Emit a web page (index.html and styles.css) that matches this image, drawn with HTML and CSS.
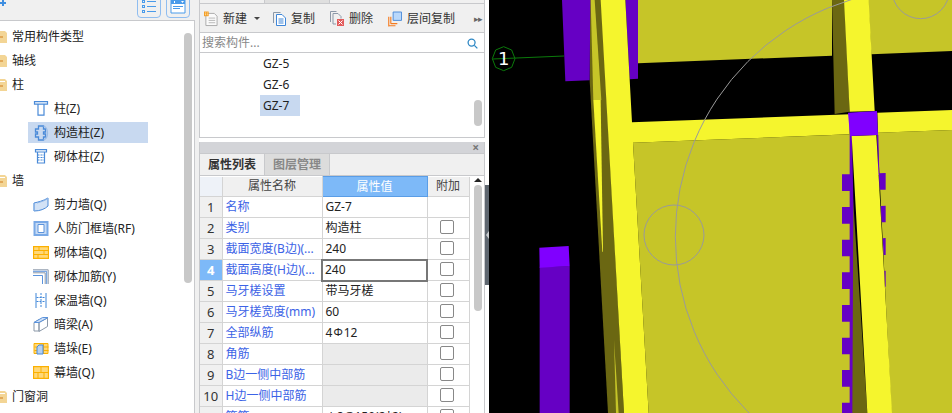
FILE: index.html
```html
<!DOCTYPE html>
<html lang="zh">
<head>
<meta charset="utf-8">
<title>构件</title>
<link rel="stylesheet" href="styles.css">
</head>
<body>
<div class="app">
  <aside class="left">
    <div class="topbar">
      <svg class="plus" width="6" height="6" viewBox="0 0 6 6"><path d="M2 0h2v2h2v2H4v2H2V4H0V2h2z" fill="#3f8ee0"/></svg>
      <div class="topbtns">
        <button class="tbtn"><svg width="14" height="15" viewBox="0 0 14 15" fill="none" stroke="#4a9bea"><rect x="0.5" y="1.5" width="2" height="2"/><rect x="0.5" y="6.5" width="2" height="2"/><rect x="0.5" y="11.5" width="2" height="2"/><path d="M5 2.5h9M5 7.5h9M5 12.5h9"/></svg></button>
        <button class="tbtn"><svg width="16" height="15" viewBox="0 0 16 15"><path d="M1 0h14v14H1z" fill="#fff" stroke="#4a9bea"/><path d="M1 0h14v5H1z" fill="#4a9bea"/><path d="M3 7.500h10M3 9.500h7" stroke="#4a9bea"/><path d="M4 2h1v2H4zM11 2h3l-1.500 2z" fill="#fff"/></svg></button>
      </div>
    </div>
    <div class="tree">
      <div class="cat"><svg class="folder" width="16" height="12" viewBox="0 0 16 12"><path d="M0 0h14l2 2v10H0z" fill="#f3d595"/><path d="M9 5h3v2H9z" fill="#e2a858"/></svg>常用构件类型</div>
      <div class="cat"><svg class="folder" width="16" height="12" viewBox="0 0 16 12"><path d="M0 0h14l2 2v10H0z" fill="#f3d595"/><path d="M9 5h3v2H9z" fill="#e2a858"/></svg>轴线</div>
      <div class="cat"><svg class="folder" width="16" height="12" viewBox="0 0 16 12"><path d="M0 0h14l2 2v10H0z" fill="#f3d595"/><path d="M9 2h5v1H9z" fill="#fff"/><path d="M9 6h3v2H9z" fill="#e2a858"/></svg>柱</div>
      <div class="item"><div class="pill"><svg class="ico" width="15" height="15" viewBox="0 0 15 15" fill="none" stroke="#4a8ad8" stroke-width="1.200"><path d="M1 .6h13v2.600H1zM4.500 3.200h6v11h-6z"/></svg>柱(Z)</div></div>
      <div class="item sel"><div class="pill"><svg class="ico" width="15" height="16" viewBox="0 0 15 16" fill="none" stroke="#4a8ad8" stroke-width="1.300"><path d="M5 1h5v3h2v3h-2v2h2v3h-2v3H5v-3H2V9h2V7H2V4h3z"/><path d="M10 1c3 1 4 3 4 7s-1 6-4 7" stroke="#9dbde6"/></svg>构造柱(Z)</div></div>
      <div class="item"><div class="pill"><svg class="ico" width="15" height="15" viewBox="0 0 15 15" fill="none" stroke="#4a8ad8" stroke-width="1.200"><path d="M2 .6h11v2.400H2zM4 3h7v11H4z"/><path d="M4 6h7M4 8.500h7M4 11h7" stroke-dasharray="2 1"/></svg>砌体柱(Z)</div></div>
      <div class="cat"><svg class="folder" width="16" height="12" viewBox="0 0 16 12"><path d="M0 0h14l2 2v10H0z" fill="#f3d595"/><path d="M9 2h5v1H9z" fill="#fff"/><path d="M9 6h3v2H9z" fill="#e2a858"/></svg>墙</div>
      <div class="item"><div class="pill"><svg class="ico" width="16" height="15" viewBox="0 0 16 15"><path d="M1 6c4-1 9-2 14-5v8c-3 3-8 5-14 5z" fill="#d2e2f6" stroke="#4a8ad8"/><path d="M1 6v8M15 1c-3 3-8 4-11 5" fill="none" stroke="#8db4e6"/></svg>剪力墙(Q)</div></div>
      <div class="item"><div class="pill"><svg class="ico" width="15" height="15" viewBox="0 0 15 15"><path d="M0 0h15v15H0z" fill="#79a9e6"/><path d="M2 2h11v11H2z" fill="#c7dbf5"/><path d="M4.500 3.500h6v8h-6z" fill="#fff" stroke="#5b93dc"/></svg>人防门框墙(RF)</div></div>
      <div class="item"><div class="pill"><svg class="ico" width="16" height="13" viewBox="0 0 16 13"><path d="M.5.500h15v12H.5z" fill="#ffd878" stroke="#fbb000" stroke-width="1.300"/><path d="M1 4.500h14M1 8.500h14M6 .5v4M11 4.500v4M5 8.500v4" stroke="#fbb000" fill="none"/></svg>砌体墙(Q)</div></div>
      <div class="item"><div class="pill"><svg class="ico" width="16" height="15" viewBox="0 0 16 15" fill="none"><path d="M0 .8h15.200V15M0 3.800h12.200V15" stroke="#8b98a8"/><path d="M0 6.500h9.500V15" stroke="#5b93dc"/><path d="M0 2.300h13.700V15" stroke="#5b93dc"/></svg>砌体加筋(Y)</div></div>
      <div class="item"><div class="pill"><svg class="ico" width="15" height="15" viewBox="0 0 15 15" fill="none" stroke="#3f86d8"><path d="M2.500 0v15M12.500 0v15"/><path d="M7.500 0v15" stroke-dasharray="2 1"/><path d="M3 4.500h9M3 8.500h9" stroke-dasharray="2 1"/></svg>保温墙(Q)</div></div>
      <div class="item"><div class="pill"><svg class="ico" width="15" height="15" viewBox="0 0 15 15"><path d="M.5 5.500l5-3v11.500h-5zM5.500 5.500v9l8.500-5V1z" fill="#fff" stroke="#8b98a8"/><path d="M.5 5.500L9 .5h5.500l-9 5z" fill="#cfe0f6" stroke="#5b93dc"/></svg>暗梁(A)</div></div>
      <div class="item"><div class="pill"><svg class="ico" width="15" height="12" viewBox="0 0 15 12"><path d="M.5.500h14v10H.5z" fill="#ffd878" stroke="#fbb000"/><path d="M1 4h14M1 7.500h14M10 .5v10" stroke="#fbb000" fill="none"/><path d="M3.500 4l2-2h4v9h-6z" fill="#b5d0f0" stroke="#4a8ad8"/></svg>墙垛(E)</div></div>
      <div class="item"><div class="pill"><svg class="ico" width="16" height="13" viewBox="0 0 16 13"><path d="M.5.500h15v12H.5z" fill="#ffd878" stroke="#fbb000" stroke-width="1.300"/><path d="M.5 6.500h15M8 .5v6M5 6.500v6M11 6.500v6" stroke="#fbb000" fill="none"/></svg>幕墙(Q)</div></div>
      <div class="cat"><svg class="folder" width="16" height="12" viewBox="0 0 16 12"><path d="M0 0h14l2 2v10H0z" fill="#f3d595"/><path d="M9 2h5v1H9z" fill="#fff"/><path d="M9 6h3v2H9z" fill="#e2a858"/></svg>门窗洞</div>
      <div class="thumb tree-thumb"></div>
    </div>
  </aside>

  <main class="mid">
    <div class="tabstrip"><span class="striptab"></span></div>
    <div class="toolbar">
      <span class="tool"><svg width="14" height="16" viewBox="0 0 15 16"><path d="M2 2h9l3 3v10H2z" fill="#fafafa" stroke="#a8a8a8"/><path d="M5 7h7M5 9.500h7M5 12h7" stroke="#b5b5b5"/><path d="M0 0h5v5H0z" fill="#f49a20"/><path d="M1 1h1v1H1zM3 3h1v1H3zM3 1h1v1H3zM1 3h1v1H1z" fill="#fff3c4"/></svg>新建<i class="caret"></i></span>
      <span class="tool"><svg width="13" height="14" viewBox="0 0 13 14" fill="none"><path d="M.5 11V.5h7" stroke="#8b98a8"/><path d="M3.500 2.500h5.500l3.500 3.500v7.500h-9z" fill="#fff" stroke="#3f86d8"/><path d="M5.500 7h5M5.500 9h5M5.500 11h5" stroke="#3f86d8"/></svg>复制</span>
      <span class="tool"><svg width="14" height="15" viewBox="0 0 14 15"><path d="M.5 11V.5h6" fill="none" stroke="#8b98a8"/><path d="M3 2.500h5l3 3v2M3 2.500V13h3" fill="none" stroke="#8b98a8"/><path d="M7 8h7v7H7z" fill="#e25b5b"/><path d="M8.500 9.500l4 4M12.500 9.500l-4 4" stroke="#fff"/></svg>删除</span>
      <span class="tool"><svg width="14" height="16" viewBox="0 0 15 16" fill="none"><path d="M.8 16V5.500M.8 15.200H8M3 13V5.500M3 13h7" stroke="#f47b20" stroke-width="1.200"/><path d="M5.500.5h9v9h-9z" fill="#b9d8fb" stroke="#4a8ad8"/></svg>层间复制</span>
      <span class="more">▸▸</span>
    </div>
    <div class="search"><span>搜索构件...</span><svg width="11" height="11" viewBox="0 0 12 12" fill="none" stroke="#2d87c4" stroke-width="1.400"><circle cx="5" cy="5" r="3.800"/><path d="M8 8l3.300 3.300"/></svg></div>
    <div class="list">
      <div class="li">GZ-5</div>
      <div class="li">GZ-6</div>
      <div class="li on">GZ-7</div>
      <div class="thumb list-thumb"></div>
    </div>
    <div class="gap"></div>
    <div class="titlebar"><span class="x">×</span></div>
    <div class="tabs"><span class="tab active">属性列表</span><span class="tab">图层管理</span></div>
    <div class="grid-wrap">
      <table class="props">
        <colgroup><col class="c0"><col class="c1"><col class="c2"><col class="c3"></colgroup>
        <thead><tr><th class="corner"></th><th>属性名称</th><th class="hl">属性值</th><th>附加</th></tr></thead>
        <tbody>
          <tr><td class="n">1</td><td class="k">名称</td><td class="v">GZ-7</td><td class="a"></td></tr>
          <tr><td class="n">2</td><td class="k">类别</td><td class="v">构造柱</td><td class="a"><i class="cb"></i></td></tr>
          <tr><td class="n">3</td><td class="k">截面宽度(B边)(...</td><td class="v">240</td><td class="a"><i class="cb"></i></td></tr>
          <tr><td class="n cur">4</td><td class="k">截面高度(H边)(...</td><td class="v edit">240</td><td class="a"><i class="cb"></i></td></tr>
          <tr><td class="n">5</td><td class="k">马牙槎设置</td><td class="v">带马牙槎</td><td class="a"><i class="cb"></i></td></tr>
          <tr><td class="n">6</td><td class="k">马牙槎宽度(mm)</td><td class="v">60</td><td class="a"><i class="cb"></i></td></tr>
          <tr><td class="n">7</td><td class="k">全部纵筋</td><td class="v">4<span class="rebar">Φ</span>12</td><td class="a"><i class="cb"></i></td></tr>
          <tr><td class="n">8</td><td class="k">角筋</td><td class="v off"></td><td class="a"><i class="cb"></i></td></tr>
          <tr><td class="n">9</td><td class="k">B边一侧中部筋</td><td class="v off"></td><td class="a"><i class="cb"></i></td></tr>
          <tr><td class="n">10</td><td class="k">H边一侧中部筋</td><td class="v off"></td><td class="a"><i class="cb"></i></td></tr>
          <tr><td class="n">11</td><td class="k">箍筋</td><td class="v"><span class="rebar">Φ</span>8@150(2*2)</td><td class="a"><i class="cb"></i></td></tr>
        </tbody>
      </table>
      <div class="vbar"><i class="up"></i><div class="thumb prop-thumb"></div></div>
    </div>
  </main>

  <div class="splitter"><div class="handle"><i></i></div></div>

  <div class="canvas">
    <svg class="scene" width="463" height="413" viewBox="3 0 1389 1239">
      <path class="olive" d="M450 0H1032V167L450 190zM1140 0H1392V153L1150 163zM435 428L1090 403V1239H482zM1168 398L1392 390V1239H1210z"/>
      <path class="dark" d="M1032 0H1070L1085 335L1040 342zM1094 580L1138 1239H1090z"/>
      <path class="dark" d="M305 0H340L408 1239H360L305 240z"/>
      <path class="olive" d="M308 0H320L340 300H316z"/>
      <path class="olive" d="M378 1020L392 1239H384z"/>
      <path class="yellow" d="M316 300H338L345 755H343z"/>
      <path class="purple" d="M222 0H307L305 241L232 244zM412 0H450V236L425 238zM155 800L245 798V1239H155z"/>
      <path class="purple" d="M1085 405H1092L1096 600L1093 1239H1085zM1167 405H1171L1174 525H1170z"/>
      <path class="purple" d="M1062 523H1090V573H1062zM1062 621H1090V671H1062zM1062 719H1090V769H1062zM1062 817H1090V867H1062zM1062 915H1090V965H1062zM1062 1013H1090V1063H1062zM1062 1110H1090V1160H1062zM1062 1208H1090V1239H1062z"/>
      <path class="purple" d="M1172 520L1193 519V569H1175zM1178 618L1193 617V667H1181zM1184 715L1193 714V765H1187zM1189 813L1193 812V860H1191z"/>
      <path class="yellow" d="M338 0H412L432 367L1085 343V403L435 428L482 1239H408zM1068 0H1142L1160 333L1085 335zM1168 338L1392 330V390L1170 398zM1091 408L1165 405L1212 1239H1138z"/>
      <path class="violet" d="M1080 338L1167 333L1170 405L1086 408zM154 743L242 738L245 798L155 803z"/>
      <circle class="ring" cx="1305" cy="710" r="743"/>
      <circle class="ring" cx="558" cy="705" r="90"/>
      <circle class="ring" cx="1298" cy="-30" r="86"/>
      <path class="axis" d="M14 177L228 168M47 140L71 150L81 176L71 202L47 212L23 202L13 176L23 150z"/>
      <text class="axis-label" x="47" y="196">1</text>
    </svg>
  </div>
</div>
</body>
</html>
```

FILE: styles.css
```css
* { box-sizing: border-box; }
html, body { margin: 0; height: 100%; overflow: hidden; background: #fff; }
body { font: 12px/1 "Noto Sans", "Noto Sans CJK SC", sans-serif; color: #222; }
.app { display: flex; height: 413px; overflow: hidden; }

/* left panel */
.left { width: 199px; flex: none; display: flex; flex-direction: column; background: #f0f0f0; }
.topbar { height: 21px; flex: none; display: flex; justify-content: space-between; align-items: flex-start; padding-right: 5px; border-bottom: 1px solid #c8c9cc; margin-right: 4px; }
.plus { display: block; margin-top: 0; }
.topbtns { display: flex; gap: 5px; margin-top: -1px; }
.tbtn { width: 24px; height: 19px; padding: 0; display: flex; align-items: flex-end; justify-content: center; background: #f0f0f0; border: 1px solid #8fbdf0; border-radius: 0 0 4px 4px; overflow: hidden; }
.tbtn svg { display: block; margin-bottom: 3px; }
.tree { position: relative; width: 195px; flex: 1; padding-top: 4px; background: #fff; border-right: 1px solid #c8c9cc; overflow: hidden; }
.cat { height: 24px; display: flex; align-items: center; padding-left: 12px; position: relative; }
.folder { position: absolute; left: -9px; top: 6px; }
.item { height: 24px; padding: 1px 0 2px 28px; }
.pill { width: 120px; height: 21px; padding-left: 5px; display: flex; align-items: center; white-space: nowrap; }
.item.sel .pill { background: #c8d9f0; }
.ico { width: 16px; flex: none; margin-right: 5px; }
.thumb { position: absolute; background: #c8c8c8; border-radius: 4px; }
.tree-thumb { left: 184px; top: 12px; width: 8px; height: 250px; }

/* middle panel */
.mid { width: 286px; flex: none; display: flex; flex-direction: column; border-left: 1px solid #c8c9cc; border-right: 1px solid #c8c9cc; }
.tabstrip { height: 4px; flex: none; background: #f0f0f0; border-bottom: 1px solid #c8c9cc; padding-left: 64px; }
.striptab { display: block; width: 66px; height: 3px; background: #dfdfdf; border-left: 1px solid #c8c9cc; border-right: 1px solid #c8c9cc; }
.toolbar { height: 29px; flex: none; display: flex; align-items: center; gap: 15px; padding: 1px 1px 0 4px; background: #f0f0f0; border-bottom: 1px solid #c8c9cc; color: #333; }
.tool { display: flex; align-items: center; gap: 5px; white-space: nowrap; }
.caret { width: 0; height: 0; border: 3px solid transparent; border-top: 3px solid #444; border-bottom: 0; margin: 0 -2px 0 2px; }
.more { margin-left: auto; padding-right: 1px; font-size: 9px; letter-spacing: -1px; color: #666; }
.search { height: 20px; flex: none; display: flex; align-items: center; justify-content: space-between; padding: 1px 6px 0 2px; border-bottom: 1px solid #c8c9cc; color: #888; }
.list { position: relative; height: 85px; flex: none; padding: 0 0 0 60px; border-bottom: 1px solid #c8c9cc; }
.li { width: 40px; height: 21px; line-height: 21px; padding-left: 3px; }
.li.on { background: #c8d9f0; }
.list-thumb { left: 274px; top: 47px; width: 8px; height: 26px; }
.gap { height: 4px; flex: none; margin: 0 -1px; background: #fff; border-right: 0; }
.titlebar { height: 12px; flex: none; display: flex; justify-content: flex-end; align-items: center; padding-right: 5px; background: #d3d4d8; border-bottom: 1px solid #c8c9cc; }
.x { font-size: 12px; font-weight: 700; color: #777; line-height: 10px; }
.tabs { height: 22px; flex: none; display: flex; background: #f0f0f0; border-bottom: 1px solid #c8c9cc; }
.tab { width: 65px; display: flex; align-items: center; justify-content: center; background: #dcdcdc; color: #888; font-weight: 700; border-right: 1px solid #c8c9cc; }
.tab.active { background: #f0f0f0; color: #333; }

/* property grid */
.grid-wrap { display: flex; flex: 1; min-height: 0; }
.props { width: 269px; flex: none; table-layout: fixed; border-collapse: collapse; align-self: flex-start; }
.c0 { width: 22px; } .c1 { width: 100px; } .c2 { width: 105px; } .c3 { width: 42px; }
.props th, .props td { height: 21px; padding: 0; border: 1px solid #d4d4d4; font-weight: 400; white-space: nowrap; overflow: hidden; }
.props tr > :first-child { border-left: 0; }
.props thead th { height: 20px; border-top: 0; background: #f0f0f0; color: #444; text-align: center; }
.props thead .corner { background: #eef2f8; }
.props thead .hl { background: #7db9f8; color: #fff; border: 1px solid #5a9de6; }
.n { text-align: center; background: #f0f0f0; color: #333; font-size: 13px; }
.n.cur { background: #7db9f8; color: #fff; font-weight: 700; }
.k { padding-left: 3px !important; color: #3c63e6; }
.v { padding-left: 3px !important; color: #222; }
.v.off { background: #ebebeb; }
.v.edit { border: 2px solid #777 !important; padding-left: 2px !important; }
.a { text-align: center; padding-right: 3px !important; }
.cb { display: inline-block; width: 14px; height: 14px; margin-bottom: 2px; border: 1px solid #888; border-radius: 2px; vertical-align: middle; background: #fff; }
.rebar { font-size: 11px; margin: 0 1px; position: relative; top: -1px; }
.vbar { position: relative; flex: 1; background: #fff; }
.up { position: absolute; left: 4px; top: 2px; width: 0; height: 0; border: 4px solid transparent; border-bottom: 4px solid #222; border-top: 0; }
.prop-thumb { left: 4px; top: 9px; width: 8px; height: 126px; }

/* splitter */
.splitter { position: relative; width: 4px; flex: none; background: #fff; }
.handle { position: absolute; left: 0; top: 185px; width: 4px; height: 100px; background: #5f6770; display: flex; align-items: center; justify-content: center; }
.handle i { width: 0; height: 0; border: 4px solid transparent; border-right: 3px solid #c9ccd0; border-left: 0; }

/* 3D canvas */
.canvas { flex: 1; background: #000; overflow: hidden; }
.scene { display: block; }
.olive { fill: #c6c528; }
.dark { fill: #6b6712; }
.yellow { fill: #f5f52d; }
.purple { fill: #6600c4; }
.violet { fill: #8000ff; }
.ring { fill: none; stroke: #9a9a9a; stroke-width: 3; }
.axis { fill: none; stroke: #0b7a0b; stroke-width: 3; }
.axis-label { fill: #fff; font: 54px "DejaVu Sans", sans-serif; text-anchor: middle; }
```
